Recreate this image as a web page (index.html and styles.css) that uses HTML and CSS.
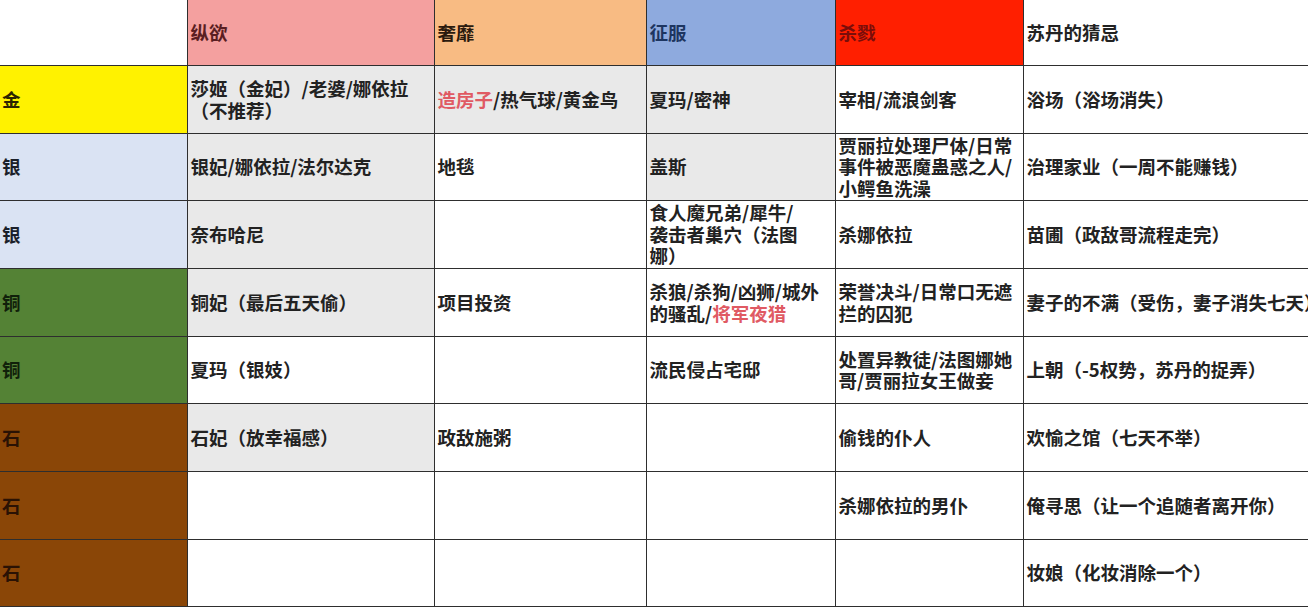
FILE: index.html
```html
<!DOCTYPE html>
<html lang="zh-CN">
<head>
<meta charset="utf-8">
<title>苏丹的游戏 卡牌表</title>
<link rel="stylesheet" href="styles.css">
</head>
<body>
<div class="sheet">
<table class="grid">
  <colgroup>
    <col class="c0"><col class="c1"><col class="c2"><col class="c3"><col class="c4"><col class="c5">
  </colgroup>
  <tr class="r-head">
    <td class="blank"></td>
    <td class="h-lust">纵欲</td>
    <td class="h-luxury">奢靡</td>
    <td class="h-conquer">征服</td>
    <td class="h-kill">杀戮</td>
    <td class="h-sultan">苏丹的猜忌</td>
  </tr>
  <tr class="r68">
    <td class="tier gold">金</td>
    <td class="gray">莎姬（金妃）/老婆/娜依拉<br>（不推荐）</td>
    <td class="gray"><span class="red">造房子</span>/热气球/黄金鸟</td>
    <td class="gray">夏玛/密神</td>
    <td>宰相/流浪剑客</td>
    <td>浴场（浴场消失）</td>
  </tr>
  <tr class="r67">
    <td class="tier silver">银</td>
    <td class="gray">银妃/娜依拉/法尔达克</td>
    <td>地毯</td>
    <td class="gray">盖斯</td>
    <td>贾丽拉处理尸体/日常<br>事件被恶魔蛊惑之人/<br>小鳄鱼洗澡</td>
    <td>治理家业（一周不能赚钱）</td>
  </tr>
  <tr class="r68">
    <td class="tier silver">银</td>
    <td class="gray">奈布哈尼</td>
    <td></td>
    <td>食人魔兄弟/犀牛/<br>袭击者巢穴（法图<br>娜）</td>
    <td>杀娜依拉</td>
    <td>苗圃（政敌哥流程走完）</td>
  </tr>
  <tr class="r68">
    <td class="tier bronze">铜</td>
    <td class="gray">铜妃（最后五天偷）</td>
    <td>项目投资</td>
    <td>杀狼/杀狗/凶狮/城外<br>的骚乱/<span class="red">将军夜猎</span></td>
    <td>荣誉决斗/日常口无遮<br>拦的囚犯</td>
    <td>妻子的不满（受伤，妻子消失七天）</td>
  </tr>
  <tr class="r67">
    <td class="tier bronze">铜</td>
    <td>夏玛（银妓）</td>
    <td></td>
    <td>流民侵占宅邸</td>
    <td>处置异教徒/法图娜她<br>哥/贾丽拉女王做妾</td>
    <td>上朝（-5权势，苏丹的捉弄）</td>
  </tr>
  <tr class="r68">
    <td class="tier stone">石</td>
    <td class="gray">石妃（放幸福感）</td>
    <td>政敌施粥</td>
    <td></td>
    <td>偷钱的仆人</td>
    <td>欢愉之馆（七天不举）</td>
  </tr>
  <tr class="r68">
    <td class="tier stone">石</td>
    <td></td>
    <td></td>
    <td></td>
    <td>杀娜依拉的男仆</td>
    <td>俺寻思（让一个追随者离开你）</td>
  </tr>
  <tr class="r67">
    <td class="tier stone">石</td>
    <td></td>
    <td></td>
    <td></td>
    <td></td>
    <td>妆娘（化妆消除一个）</td>
  </tr>
</table>
</div>
</body>
</html>
```

FILE: styles.css
```css
html, body {
  margin: 0;
  padding: 0;
  background: #ffffff;
  overflow: hidden;
}

.sheet {
  width: 1308px;
  height: 607px;
  overflow: hidden;
}

.grid {
  border-collapse: collapse;
  table-layout: fixed;
  width: 1330px;
  font-family: "Noto Sans CJK SC", "Noto Sans", sans-serif;
  font-size: 18.5px;
  font-weight: 700;
  line-height: 21.5px;
  color: #222222;
}

.c0 { width: 187px; }
.c1 { width: 247px; }
.c2 { width: 212px; }
.c3 { width: 189px; }
.c4 { width: 188px; }
.c5 { width: 307px; }

.grid td {
  border: 1px solid #2e2e2e;
  padding: 0 0 0 3px;
  vertical-align: middle;
  white-space: nowrap;
  overflow: hidden;
  background: #ffffff;
}

.grid tr:first-child td { border-top: none; }
.grid td:first-child { border-left: none; padding-left: 2px; }

.r-head td { height: 65px; }
.r68 td { height: 67px; }
.r67 td { height: 66px; }

.grid td.gray { background: #e9e9e9; }

.h-lust { background: #f4a09f !important; color: #5a1e22; }
.h-luxury { background: #f8bb83 !important; color: #2b1a0e; }
.h-conquer { background: #8eaade !important; color: #1d3560; }
.h-kill { background: #ff1f00 !important; color: #7a0d0a; }
.h-sultan { color: #222222; }

.tier.gold { background: #fff200; color: #2b2400; }
.tier.silver { background: #dae3f3; color: #1a1f2a; }
.tier.bronze { background: #548235; color: #10200a; }
.tier.stone { background: #8a4607; color: #2a1204; }

.red { color: #e05a63; }
```
